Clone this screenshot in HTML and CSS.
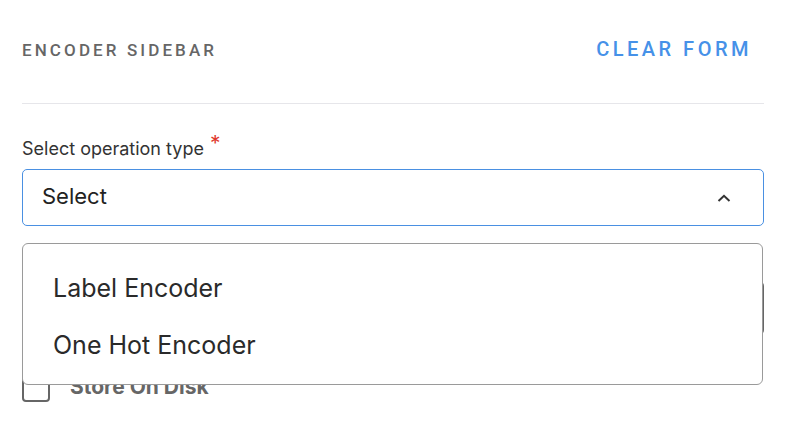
FILE: index.html
```html
<!DOCTYPE html>
<html>
<head>
<meta charset="utf-8">
<link rel="stylesheet" href="styles.css">
</head>
<body>
<div class="page">
  <div class="header">
    <div class="title">ENCODER SIDEBAR</div>
    <button class="clear">CLEAR FORM</button>
  </div>
  <div class="field">
    <label class="label">Select operation type <span class="req">*</span></label>
    <div class="select-wrap">
      <div class="select">
        <span class="select-text">Select</span>
        <svg class="chev" width="14" height="8" viewBox="0 0 14 8"><path d="M1.5 7 L7 1.8 L12.5 7" fill="none" stroke="#333" stroke-width="2"/></svg>
      </div>
      <div class="menu">
        <div class="item">Label Encoder</div>
        <div class="item">One Hot Encoder</div>
      </div>
    </div>
  </div>
  <div class="field field2">
    <label class="label">Column name</label>
    <div class="input"></div>
  </div>
  <div class="check-row">
    <span class="box"></span>
    <span class="check-label">Store On Disk</span>
  </div>
</div>
</body>
</html>
```

FILE: styles.css
```css
html, body { margin: 0; padding: 0; background: #fff; }
.page { padding: 0 22px; font-family: "Inter", "Noto Sans", sans-serif; color: #222; }
.header {
  display: flex; justify-content: space-between; align-items: center;
  height: 103px; border-bottom: 1px solid #e6e6ea; box-sizing: content-box;
}
.title {
  font-family: "Roboto", sans-serif; font-weight: 500; font-size: 17px;
  letter-spacing: 3.1px; color: #666; margin-top: -4px;
}
.clear {
  font-family: "Roboto", sans-serif; font-weight: 500; font-size: 20px;
  letter-spacing: 3.5px; color: #4691e8; background: none; border: none;
  padding: 8px 12px 8px 8px; margin-top: -6px;
}
.field { display: flex; flex-direction: column; }
.label { font-size: 18px; line-height: 22px; color: #333; margin-top: 34px; margin-bottom: 9px; }
.req { color: #e0382e; font-size: 21px; vertical-align: top; position: relative; top: -5px; margin-left: 1px; }
.select-wrap { position: relative; }
.select {
  height: 55px; border: 1px solid #4a90e2; border-radius: 5px;
  display: flex; align-items: center; justify-content: space-between;
  padding: 0 32px 0 19px;
}
.select-text { font-size: 22px; color: #222; margin-top: -3px; }
.chev { display: block; }
.menu {
  position: absolute; left: 0; right: 1px; top: calc(100% + 17px);
  height: 142px; border: 1px solid #9a9a9a; border-radius: 6px; background: #fff;
  z-index: 2; padding-top: 15px; box-sizing: border-box;
}
.item { font-size: 25px; padding-left: 30px; color: #2a2a2a; height: 57px; display: flex; align-items: center; }
.field2 .label { margin-top: 20px; margin-bottom: 13px; }
.input { height: 50px; border: 2px solid #666; border-radius: 5px; }
.check-row { display: flex; align-items: center; margin-top: 39px; gap: 20px; }
.box { width: 24px; height: 24px; border: 2px solid #666; border-radius: 4px; }
.check-label { font-size: 21px; font-weight: 700; color: #666; margin-top: -3px; }
```
